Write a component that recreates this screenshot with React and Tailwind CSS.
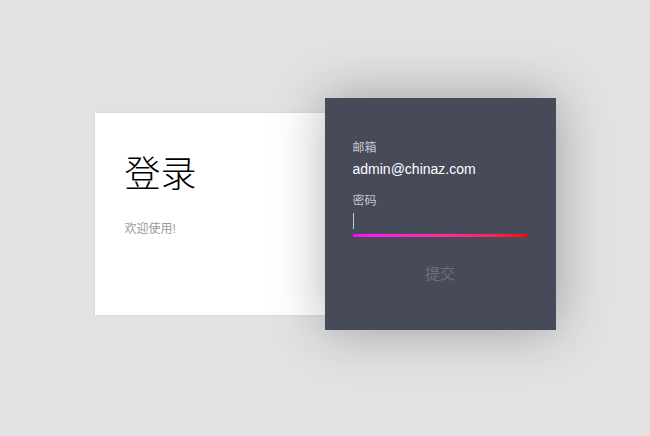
const CJK = { fontFamily: '"Liberation Sans", "Noto Sans CJK SC", sans-serif' }

function Intro() {
  return (
    <div className="w-[230px] h-[202px] bg-white pl-[30px] pt-[40px] shadow-[0_0_3px_rgba(0,0,0,0.08)]">
      <h1 className="text-[36px] leading-none text-black font-light" style={{ fontFamily: '"Noto Sans CJK SC", serif' }}>
        登录
      </h1>
      <p className="mt-[32px] text-[12px] leading-[16px] text-[#9a9a9a]">欢迎使用!</p>
    </div>
  )
}

function LoginForm() {
  return (
    <div className="relative z-10 w-[231px] h-[232px] bg-[#474a59] px-[28px] pt-[42px] flex flex-col shadow-[0_0_50px_rgba(0,0,0,0.3)]">
      {/* Email */}
      <label className="text-[12px] leading-[16px] text-[#c5c7cd]">邮箱</label>
      <div className="mt-[3px] text-[14px] leading-[20px] text-white">admin@chinaz.com</div>

      {/* Password */}
      <label className="mt-[14px] text-[12px] leading-[16px] text-[#c5c7cd]">密码</label>
      <div className="h-[24px] pt-[4px]">
        <span className="block w-px h-[16px] bg-[#c8c9cf]" />
      </div>
      <div className="mt-[1px] h-[3px] w-full bg-linear-to-r from-[#ff00ff] to-[#ff0000]" />

      {/* Submit */}
      <button className="mt-[27px] text-[15px] leading-[20px] text-[#6d707e] text-center">提交</button>
    </div>
  )
}

export default function App() {
  return (
    <div className="w-[650px] h-[436px] bg-[#e2e2e4] flex items-center justify-center pb-[8px]" style={CJK}>
      <div className="flex items-center">
        <Intro />
        <LoginForm />
      </div>
    </div>
  )
}
